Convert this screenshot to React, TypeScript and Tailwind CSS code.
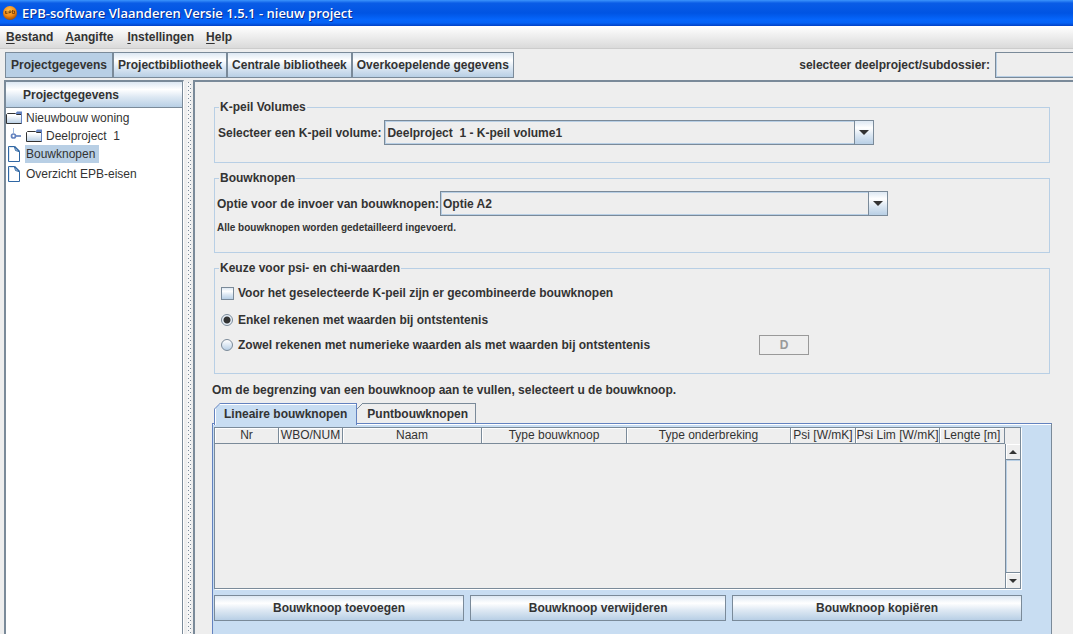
import React from "react";

const METAL =
  "bg-[linear-gradient(to_bottom,#dde8f3_0%,#ffffff_30%,#dde8f3_60%,#b8cfe5_100%)]";

function TitleBar() {
  return (
    <header className="flex h-[26px] items-center gap-1 bg-[linear-gradient(to_bottom,#3c94fc_0%,#0a5ce6_12%,#0054e3_50%,#0565fb_75%,#0562f5_88%,#0140c4_100%)] pl-[2px]">
      <svg width="16" height="16" viewBox="0 0 16 16" aria-hidden="true">
        <defs>
          <radialGradient id="ball" cx="0.45" cy="0.3" r="0.7">
            <stop offset="0" stopColor="#ffc04d" />
            <stop offset="0.6" stopColor="#f58a12" />
            <stop offset="1" stopColor="#9a4a08" />
          </radialGradient>
        </defs>
        <circle cx="8" cy="8" r="7" fill="url(#ball)" />
        <path d="M3.500 7h2M3.500 6v2.500h2M7 8.500V6h2v1.500H7M10.500 5v3.500h2V6h-2" stroke="#5c3208" strokeWidth="0.7" fill="none" />
      </svg>
      <h1 className="font-['Open_Sans','Noto_Sans',sans-serif] text-[13px] leading-4 font-semibold whitespace-pre text-white [text-shadow:1px_1px_0_#0a2a8c]">
        EPB-software Vlaanderen Versie 1.5.1 - nieuw project
      </h1>
    </header>
  );
}

function MenuItem({ name }: { name: string }) {
  return (
    <button type="button" className="leading-[14px]">
      <span className="underline underline-offset-2">{name[0]}</span>
      {name.slice(1)}
    </button>
  );
}

function ViewButton({ children, active }: { children: string; active?: boolean }) {
  return (
    <button
      type="button"
      aria-pressed={!!active}
      className={`h-[26px] border border-[#7a8a99] whitespace-nowrap ${active ? "bg-[#b8cfe5] px-[5px]" : `px-1 ${METAL}`}`}
    >
      {children}
    </button>
  );
}

function Folder() {
  return (
    <svg width="16" height="14" viewBox="0 0 16 14" className="shrink-0" aria-hidden="true">
      <defs>
        <linearGradient id="folder" x1="0" y1="0" x2="0" y2="1">
          <stop offset="0.2" stopColor="#ffffff" />
          <stop offset="1" stopColor="#b8cfe5" />
        </linearGradient>
      </defs>
      <path d="M0.500 12.500V3.500L1.500 2.500h8l1 1h5v9z" fill="url(#folder)" stroke="#333333" />
      <path d="M9.500 2.500L11 0.500h5V3h-6z" fill="#6382bf" />
      <path d="M15.500 3v9.500" stroke="#6382bf" />
    </svg>
  );
}

function Leaf() {
  return (
    <svg width="16" height="16" viewBox="0 0 16 16" className="shrink-0" aria-hidden="true">
      <path d="M2.500 0.500h6l5 5v10h-11z" fill="#ffffff" stroke="#2f66a3" />
      <path d="M3.500 14.500v-13h4.500" fill="none" stroke="#dde8f3" />
      <path d="M8.500 1l1 3.500 3.500 1" fill="none" stroke="#2f66a3" />
      <path d="M8.500 0.500l5 5" stroke="#2f66a3" strokeWidth="1.500" />
    </svg>
  );
}

function Tree() {
  return (
    <ul className="leading-[18px] font-normal whitespace-pre text-[#333333]">
      <li className="flex h-[19px] items-center gap-1">
        <Folder />
        Nieuwbouw woning
      </li>
      <li className="flex h-[17px] items-center gap-1">
        <svg width="16" height="16" viewBox="0 0 16 16" className="shrink-0" aria-hidden="true">
          <path d="M7.500 0v5" stroke="#9db8dd" />
          <circle cx="7.500" cy="8" r="2" fill="#ffffff" stroke="#6382bf" strokeWidth="1.700" />
          <path d="M10 8h5" stroke="#6382bf" strokeWidth="1.700" />
        </svg>
        <Folder />
        Deelproject  1
      </li>
      <li className="flex h-5 items-center gap-[3px]">
        <Leaf />
        <span className="bg-[#b8cfe5] pr-1 pl-px">Bouwknopen</span>
      </li>
      <li className="flex h-5 items-center gap-1">
        <Leaf />
        Overzicht EPB-eisen
      </li>
    </ul>
  );
}

function Sidebar() {
  return (
    <aside className="flex w-[180px] shrink-0 flex-col border-t-2 border-r border-l-2 border-[#7a8a99] border-r-white bg-white">
      <div className="flex grow flex-col border-r border-[#7a8a99]">
        <h2 className={`h-[26px] border-b border-[#7a8a99] pl-[17px] leading-[27px] ${METAL}`}>
          Projectgegevens
        </h2>
        <Tree />
      </div>
    </aside>
  );
}

function Splitter() {
  return (
    <div className="flex w-[9px] shrink-0 justify-center pt-[2px]">
      <svg width="4" className="w-1 self-stretch" aria-hidden="true">
        <defs>
          <pattern id="bumps" width="4" height="4" patternUnits="userSpaceOnUse">
            <rect width="4" height="4" fill="#f6f6f6" />
            <rect x="1" y="0" width="1" height="1" fill="#7a8a99" />
            <rect x="3" y="2" width="1" height="1" fill="#7a8a99" />
          </pattern>
        </defs>
        <rect width="4" height="100%" fill="url(#bumps)" />
      </svg>
    </div>
  );
}

function Combo({ id, value, width }: { id: string; value: string; width: string }) {
  return (
    <span className={`grid h-[25px] ${width}`}>
      <select
        id={id}
        className="col-start-1 row-start-1 appearance-none border border-[#7a8a99] bg-[#eeeeee] pr-5 pl-[2px] shadow-[inset_0_0_0_1px_#b8cfe5] outline-none"
      >
        <option>{value}</option>
      </select>
      <span
        className={`pointer-events-none col-start-1 row-start-1 flex w-5 items-center justify-center justify-self-end border border-[#7a8a99] ${METAL}`}
      >
        <svg width="10" height="5" viewBox="0 0 10 5" aria-hidden="true">
          <path d="M0 0h10L5 5z" fill="#333333" />
        </svg>
      </span>
    </span>
  );
}

function Group({ title, children }: { title: string; children: React.ReactNode }) {
  return (
    <fieldset className="min-w-0 border border-[#b8cfe5] px-[2px]">
      <legend className="ml-[2px] px-[1px] leading-[15px]">{title}</legend>
      {children}
    </fieldset>
  );
}

const RADIO =
  "m-0 size-3 appearance-none rounded-full border border-[#7a8a99] bg-[linear-gradient(to_bottom,#ffffff,#dde8f3,#b8cfe5)] checked:bg-[radial-gradient(circle,#333333_0_3px,#e8f0f8_4px)]";

function Arrow({ down }: { down?: boolean }) {
  return (
    <svg width="8" height="4" viewBox="0 0 8 4" aria-hidden="true">
      <path d={down ? "M0 0h8L4 4z" : "M0 4h8L4 0z"} fill="#333333" />
    </svg>
  );
}

const COLUMNS = [
  { name: "Nr", width: "w-[64px]" },
  { name: "WBO/NUM", width: "w-[64px]" },
  { name: "Naam", width: "w-[139px]" },
  { name: "Type bouwknoop", width: "w-[145px]" },
  { name: "Type onderbreking", width: "w-[164px]" },
  { name: "Psi [W/mK]", width: "w-[65px]" },
  { name: "Psi Lim [W/mK]", width: "w-[84px]" },
  { name: "Lengte [m]", width: "w-[65px]" },
];

function JunctionTable() {
  return (
    <div className="flex h-[162px] border border-[#7a8a99] shadow-[1px_1px_0_#ffffff]">
      <div className="min-w-0 grow bg-[#eeeeee]">
        <table className="w-full table-fixed border-separate border-spacing-0">
          <thead>
            <tr>
              {COLUMNS.map((c) => (
                <th
                  key={c.name}
                  scope="col"
                  className={`h-4 overflow-hidden border-r border-b border-[#7a8a99] p-0 leading-[15px] font-normal whitespace-nowrap shadow-[inset_1px_1px_0_#ffffff] ${c.width}`}
                >
                  {c.name}
                </th>
              ))}
            </tr>
          </thead>
          <tbody />
        </table>
      </div>
      <div className="flex w-[15px] shrink-0 flex-col bg-[#eeeeee] pt-4">
        <button
          type="button"
          aria-label="Omhoog"
          className="flex h-4 items-center justify-center border-b border-l border-[#7a8a99] shadow-[inset_1px_1px_0_#ffffff]"
        >
          <Arrow />
        </button>
        <div className="grow border-l border-[#7a8a99] shadow-[inset_1px_1px_0_#b8cfe5]" />
        <button
          type="button"
          aria-label="Omlaag"
          className="flex h-4 items-center justify-center border-t border-l border-[#7a8a99] shadow-[inset_1px_1px_0_#ffffff]"
        >
          <Arrow down />
        </button>
      </div>
    </div>
  );
}

function Tabs() {
  return (
    <div role="tablist" className="flex pl-[2px]">
      <button
        type="button"
        role="tab"
        aria-selected="true"
        className="relative -mb-[2px] h-[22px] border-t border-r border-l border-[#6382bf] bg-[#c8ddf2] px-[9px] pb-[2px] whitespace-nowrap shadow-[inset_1px_1px_0_#ffffff]"
      >
        <svg width="7" height="7" viewBox="0 0 7 7" className="absolute -top-px -left-px" aria-hidden="true">
          <path d="M0 0h6.500L0 6.500z" fill="#eeeeee" />
          <path d="M0 6.500L6.500 0" stroke="#6382bf" />
        </svg>
        Lineaire bouwknopen
      </button>
      <button
        type="button"
        role="tab"
        aria-selected="false"
        className="relative h-5 border-t border-r border-[#7a8a99] pr-[7px] pl-[10px] whitespace-nowrap"
      >
        <svg width="7" height="7" viewBox="0 0 7 7" className="absolute -top-px left-0" aria-hidden="true">
          <path d="M0 0h6L0 6z" fill="#eeeeee" />
          <path d="M0 6L6 0" stroke="#7a8a99" />
        </svg>
        Puntbouwknopen
      </button>
    </div>
  );
}

function ActionButton({ children, size }: { children: string; size: string }) {
  return (
    <button type="button" className={`h-[26px] border border-[#7a8a99] ${METAL} ${size}`}>
      {children}
    </button>
  );
}

export default function App() {
  return (
    <div className="flex min-h-screen flex-col overflow-hidden bg-[#eeeeee] font-['Liberation_Sans',Arial,sans-serif] text-[12px] font-bold text-[#333333]">
      <TitleBar />
      <nav className="flex h-[23px] items-center border-b border-[#cccccc] bg-[linear-gradient(to_bottom,#ffffff,#dadada)] pl-[6px]">
        <div className="flex gap-3">
          <MenuItem name="Bestand" />
          <MenuItem name="Aangifte" />
          <span className="pl-[2px]">
            <MenuItem name="Instellingen" />
          </span>
          <MenuItem name="Help" />
        </div>
      </nav>
      <div className="flex h-[31px] items-center justify-between pl-[5px]">
        <div className="flex">
          <ViewButton active>Projectgegevens</ViewButton>
          <ViewButton>Projectbibliotheek</ViewButton>
          <ViewButton>Centrale bibliotheek</ViewButton>
          <ViewButton>Overkoepelende gegevens</ViewButton>
        </div>
        <div className="flex items-center gap-[5px]">
          <label htmlFor="subdossier">selecteer deelproject/subdossier:</label>
          <select
            id="subdossier"
            className="h-[26px] w-[78px] appearance-none border border-r-0 border-[#7a8a99] bg-[#eeeeee] shadow-[inset_1px_-1px_0_#b8cfe5]"
          />
        </div>
      </div>
      <div className="flex grow pl-1">
        <Sidebar />
        <Splitter />
        <main className="flex min-w-0 grow flex-col border-t-2 border-l-2 border-[#7a8a99] pt-[18px] pr-[21px] pl-[17px]">
          <div className="flex flex-col gap-2 pr-[2px] pl-[2px]">
            <Group title="K-peil Volumes">
              <div className="flex items-center gap-[3px] pt-[5px] pb-[17px] pl-[1px]">
                <label htmlFor="kpeil">Selecteer een K-peil volume:</label>
                <Combo id="kpeil" value={"Deelproject\u00a0 1 - K-peil volume1"} width="w-[490px]" />
              </div>
            </Group>
            <Group title="Bouwknopen">
              <div className="flex items-center gap-px pt-[5px]">
                <label htmlFor="optie">Optie voor de invoer van bouwknopen:</label>
                <Combo id="optie" value="Optie A2" width="w-[448px]" />
              </div>
              <p className="pt-[6px] pb-[18px] text-[10px] leading-3">
                Alle bouwknopen worden gedetailleerd ingevoerd.
              </p>
            </Group>
            <Group title="Keuze voor psi- en chi-waarden">
              <div className="flex flex-col pt-[3px] pb-4 pl-1">
                <label className="flex h-7 items-center gap-1">
                  <input
                    type="checkbox"
                    className={`m-0 size-[13px] appearance-none border border-[#7a8a99] ${METAL}`}
                  />
                  Voor het geselecteerde K-peil zijn er gecombineerde bouwknopen
                </label>
                <label className="flex h-[26px] items-center gap-[5px]">
                  <input type="radio" name="waarden" defaultChecked className={RADIO} />
                  Enkel rekenen met waarden bij ontstentenis
                </label>
                <div className="flex items-center">
                  <label className="flex h-6 w-[538px] items-center gap-[5px]">
                    <input type="radio" name="waarden" className={RADIO} />
                    Zowel rekenen met numerieke waarden als met waarden bij ontstentenis
                  </label>
                  <button type="button" disabled className="h-5 w-[50px] border border-[#999999] text-[#999999]">
                    D
                  </button>
                </div>
              </div>
            </Group>
          </div>
          <p className="pt-2 leading-4">Om de begrenzing van een bouwknoop aan te vullen, selecteert u de bouwknoop.</p>
          <div className="flex grow flex-col pt-[5px]">
            <Tabs />
            <section className="grow border-t border-r border-l border-t-[#6382bf] border-r-[#7a8a99] border-l-[#6382bf] bg-[#c8ddf2] pt-[3px] pr-[29px] pl-[1px] shadow-[inset_0_1px_0_#ffffff]">
              <div className="pr-[1px]">
                <JunctionTable />
              </div>
              <div className="flex gap-[6px] pt-[6px]">
                <ActionButton size="flex-[250]">Bouwknoop toevoegen</ActionButton>
                <ActionButton size="flex-[256]">Bouwknoop verwijderen</ActionButton>
                <ActionButton size="flex-[290]">Bouwknoop kopiëren</ActionButton>
              </div>
            </section>
          </div>
        </main>
      </div>
    </div>
  );
}
